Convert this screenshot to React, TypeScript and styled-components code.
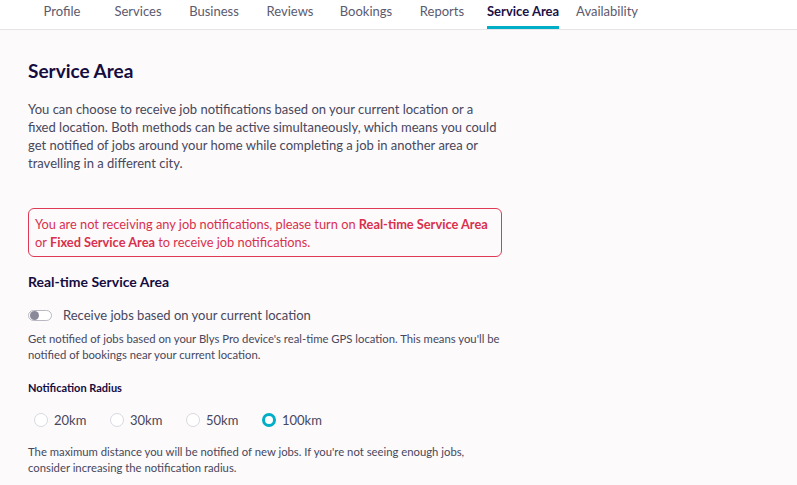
import React from "react";
import styled, { createGlobalStyle } from "styled-components";

const Global = createGlobalStyle`
  html, body { margin: 0; padding: 0; background: #fcfafb; }
  body { font-family: "Lato", "Open Sans", sans-serif; color: #44435a; }
  * { box-sizing: border-box; }
`;

const Page = styled.div`
  width: 797px;
  min-height: 485px;
  background: #fcfafb;
`;

const NavBar = styled.nav`
  display: flex;
  align-items: stretch;
  height: 30px;
  padding-left: 24px;
  background: #ffffff;
  border-bottom: 1px solid #e6e4e6;
`;

const Tab = styled.div<{ $active?: boolean }>`
  min-width: 76px;
  padding: 0 ${(p) => (p.$active ? 7 : 10)}px;
  display: flex;
  justify-content: center;
  align-items: stretch;
  font-size: 13px;
  font-weight: ${(p) => (p.$active ? 700 : 400)};
  color: ${(p) => (p.$active ? "#1a1146" : "#5b5a6e")};
`;

const TabLabel = styled.span<{ $active?: boolean }>`
  display: flex;
  align-items: center;
  padding-bottom: 4px;
  border-bottom: 3px solid ${(p) => (p.$active ? "#00aec7" : "transparent")};
`;

const Content = styled.main`
  padding: 28px 28px 0 28px;
  width: 532px;
`;

const Title = styled.h1`
  margin: 0 0 16px 0;
  font-size: 19px;
  font-weight: 700;
  color: #150c40;
  line-height: 26px;
`;

const Intro = styled.p`
  margin: 0 0 36px 0;
  font-size: 13px;
  line-height: 18px;
  color: #48475c;
`;

const Alert = styled.div`
  width: 474px;
  border: 1px solid #df3a55;
  border-radius: 6px;
  padding: 6px 7px 5px 6px;
  font-size: 12.8px;
  line-height: 18px;
  color: #d9304d;
  margin-bottom: 15px;
  b { font-weight: 700; }
`;

const SectionTitle = styled.h2`
  margin: 0 0 14px 0;
  font-size: 14px;
  font-weight: 700;
  color: #150c40;
  line-height: 20px;
`;

const ToggleRow = styled.label`
  display: flex;
  align-items: center;
  gap: 11px;
  font-size: 13px;
  color: #48475c;
  line-height: 18px;
  margin-bottom: 7px;
`;

const Track = styled.span`
  position: relative;
  width: 24px;
  height: 11px;
  border: 1px solid #b9b8c2;
  border-radius: 6px;
  background: #ffffff;
  flex: none;
`;

const Knob = styled.span`
  position: absolute;
  left: 1px;
  top: 0px;
  width: 9px;
  height: 9px;
  border-radius: 50%;
  background: #8a8999;
`;

const Small = styled.p<{ $mb?: number }>`
  margin: 0 0 ${(p) => p.$mb ?? 0}px 0;
  font-size: 11.3px;
  line-height: 16px;
  color: #48475c;
`;

const SubTitle = styled.h3`
  margin: 0 0 12px 0;
  font-size: 11px;
  font-weight: 700;
  color: #150c40;
  line-height: 16px;
`;

const RadioGroup = styled.div`
  display: flex;
  align-items: center;
  padding-left: 6px;
  margin-bottom: 12px;
`;

const Option = styled.label`
  display: flex;
  align-items: center;
  gap: 6px;
  width: 76px;
  height: 24px;
  font-size: 13px;
  color: #48475c;
`;

const Circle = styled.span<{ $checked?: boolean }>`
  width: 14px;
  height: 14px;
  border-radius: 50%;
  background: #ffffff;
  border: ${(p) => (p.$checked ? "3.5px solid #00aec7" : "1px solid #d9d8e0")};
  flex: none;
`;

const tabs = ["Profile", "Services", "Business", "Reviews", "Bookings", "Reports", "Service Area", "Availability"];
const radii = ["20km", "30km", "50km", "100km"];

export default function App() {
  return (
    <Page>
      <Global />
      <NavBar>
        {tabs.map((t) => (
          <Tab key={t} $active={t === "Service Area"}>
            <TabLabel $active={t === "Service Area"}>{t}</TabLabel>
          </Tab>
        ))}
      </NavBar>
      <Content>
        <Title>Service Area</Title>
        <Intro>
          You can choose to receive job notifications based on your current location or a fixed location. Both methods
          can be active simultaneously, which means you could get notified of jobs around your home while completing a
          job in another area or travelling in a different city.
        </Intro>
        <Alert>
          You are not receiving any job notifications, please turn on <b>Real-time Service Area</b> or{" "}
          <b>Fixed Service Area</b> to receive job notifications.
        </Alert>
        <SectionTitle>Real-time Service Area</SectionTitle>
        <ToggleRow>
          <Track>
            <Knob />
          </Track>
          Receive jobs based on your current location
        </ToggleRow>
        <Small $mb={17}>
          Get notified of jobs based on your Blys Pro device's real-time GPS location. This means you'll be notified of
          bookings near your current location.
        </Small>
        <SubTitle>Notification Radius</SubTitle>
        <RadioGroup>
          {radii.map((r) => (
            <Option key={r}>
              <Circle $checked={r === "100km"} />
              {r}
            </Option>
          ))}
        </RadioGroup>
        <Small>
          The maximum distance you will be notified of new jobs. If you're not seeing enough jobs, consider increasing
          the notification radius.
        </Small>
      </Content>
    </Page>
  );
}
